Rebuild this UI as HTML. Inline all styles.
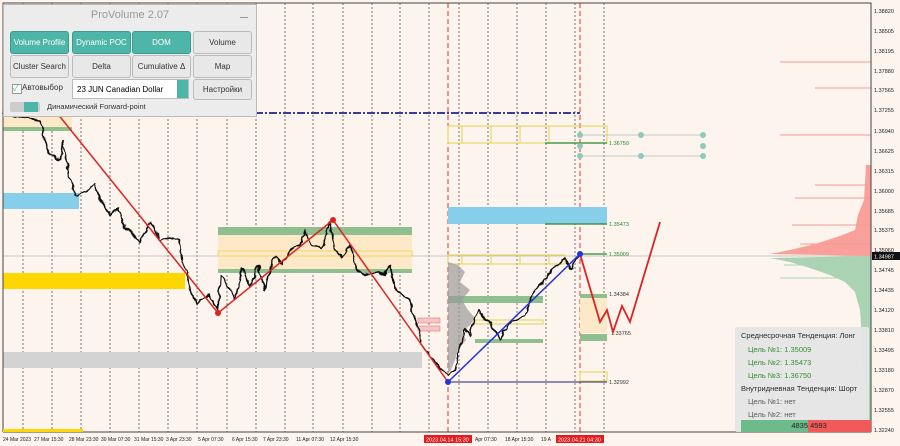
<!DOCTYPE html>
<html><head><meta charset="utf-8"><style>
body{margin:0;width:900px;height:446px;overflow:hidden;background:#fdf4ee;font-family:"Liberation Sans","Noto Sans CJK SC",sans-serif}
.p{position:absolute}
.btn{position:absolute;height:21px;border-radius:3px;font-size:8px;text-align:center;line-height:21px;border:1px solid #bbb}
.g{background:#4db6a8;color:#fff;border-color:#3a9c8f}
.w{background:#e8e8e8;color:#333}
</style></head><body>
<svg class="p" style="left:0;top:0" width="900" height="446">
<defs><filter id="j" x="-5%" y="-5%" width="110%" height="110%"><feTurbulence type="fractalNoise" baseFrequency="0.12" numOctaves="2" seed="3"/><feDisplacementMap in="SourceGraphic" scale="6" xChannelSelector="R" yChannelSelector="G"/></filter></defs>
<rect x="0" y="0" width="900" height="446" fill="#fdf4ee"/>
<g stroke="#555" stroke-width="0.8" stroke-dasharray="2,2">
<line x1="23" y1="3" x2="23" y2="432"/><line x1="52" y1="3" x2="52" y2="432"/><line x1="81" y1="3" x2="81" y2="432"/><line x1="110" y1="3" x2="110" y2="432"/><line x1="139" y1="3" x2="139" y2="432"/><line x1="168" y1="3" x2="168" y2="432"/><line x1="197" y1="3" x2="197" y2="432"/><line x1="227" y1="3" x2="227" y2="432"/><line x1="256" y1="3" x2="256" y2="432"/><line x1="285" y1="3" x2="285" y2="432"/><line x1="313" y1="3" x2="313" y2="432"/><line x1="343" y1="3" x2="343" y2="432"/><line x1="372" y1="3" x2="372" y2="432"/><line x1="400" y1="3" x2="400" y2="432"/><line x1="429" y1="3" x2="429" y2="432"/><line x1="459" y1="3" x2="459" y2="432"/><line x1="488" y1="3" x2="488" y2="432"/><line x1="517" y1="3" x2="517" y2="432"/><line x1="546" y1="3" x2="546" y2="432"/><line x1="575" y1="3" x2="575" y2="432"/><line x1="604" y1="3" x2="604" y2="432"/>
</g>
<g stroke="#d33" stroke-width="1" stroke-dasharray="5,3"><line x1="448" y1="3" x2="448" y2="432"/><line x1="580" y1="3" x2="580" y2="432"/></g>
<line x1="3" y1="256" x2="871" y2="256" stroke="#bbb" stroke-width="0.8"/>
<polygon points="871,165 866,165 864,200 858,215 855,230 840,236 815,244 790,250 770,254 871,256" fill="#f9a09a"/>
<polygon points="871,256 770,258 790,262 810,268 830,275 845,282 855,292 860,310 862,340 864,380 866,420 871,432" fill="#a9d3b3"/>
<g stroke="#f29a96" stroke-width="1"><line x1="780" y1="62" x2="871" y2="62"/><line x1="780" y1="135" x2="871" y2="135"/><line x1="815" y1="88" x2="871" y2="88"/><line x1="815" y1="185" x2="871" y2="185"/><line x1="795" y1="198" x2="871" y2="198"/><line x1="792" y1="225" x2="871" y2="225"/><line x1="800" y1="244" x2="871" y2="244"/></g>
<g stroke="#a9d3b3" stroke-width="1"><line x1="784" y1="265" x2="871" y2="265"/><line x1="780" y1="278" x2="871" y2="278"/></g>
<rect x="3" y="110" width="69" height="18" fill="#fde8c8"/><rect x="3" y="127" width="69" height="4" fill="#8fbf8f"/>
<rect x="3" y="193" width="76" height="16" fill="#87ceeb"/>
<rect x="3" y="273" width="182" height="16" fill="#ffd700"/>
<rect x="3" y="352" width="419" height="16" fill="#d3d3d3"/>
<rect x="218" y="227" width="194" height="46" fill="#fde8c8"/>
<rect x="218" y="227" width="194" height="8" fill="#8fbf8f"/><rect x="218" y="269" width="194" height="4" fill="#8fbf8f"/>
<rect x="218" y="251" width="194" height="5" fill="none" stroke="#e8d24a" stroke-width="0.8"/>
<g fill="none" stroke="#e8d24a" stroke-width="1"><rect x="448" y="126" width="159" height="17"/><line x1="462" y1="126" x2="462" y2="143"/><line x1="491" y1="126" x2="491" y2="143"/><line x1="520" y1="126" x2="520" y2="143"/><line x1="549" y1="126" x2="549" y2="143"/>
<rect x="448" y="255" width="117" height="9"/><line x1="462" y1="255" x2="462" y2="264"/><line x1="491" y1="255" x2="491" y2="264"/><line x1="520" y1="255" x2="520" y2="264"/><line x1="549" y1="255" x2="549" y2="264"/>
<rect x="475" y="320" width="68" height="4"/><rect x="580" y="372" width="27" height="9"/><rect x="580" y="313" width="27" height="4"/></g>
<rect x="448" y="207" width="159" height="17" fill="#87ceeb"/>
<rect x="448" y="296" width="95" height="7" fill="#8fbf8f"/><rect x="475" y="339" width="68" height="4" fill="#8fbf8f"/>
<rect x="580" y="297" width="27" height="36" fill="#fde8c8"/><rect x="580" y="294" width="27" height="4" fill="#8fbf8f"/><rect x="580" y="334" width="27" height="7" fill="#8fbf8f"/>
<polygon points="448,262 458,265 465,272 460,282 470,290 462,300 468,310 475,318 470,325 462,332 466,340 458,350 455,360 450,372 448,372" fill="#9a9a9a" opacity="0.7"/>
<rect x="418" y="318" width="22" height="5" fill="#f4c6c6" stroke="#d66" stroke-width="0.5"/><rect x="418" y="326" width="22" height="5" fill="#f4c6c6" stroke="#d66" stroke-width="0.5"/>
<g stroke="#2a8a2a" stroke-width="1.2"><line x1="545" y1="143" x2="607" y2="143"/><line x1="545" y1="224" x2="607" y2="224"/><line x1="582" y1="254" x2="607" y2="254"/></g>
<line x1="448" y1="382" x2="607" y2="382" stroke="#22227a" stroke-width="1"/>
<line x1="255" y1="113" x2="580" y2="113" stroke="#3a3aa0" stroke-width="2" stroke-dasharray="8,2,2,2"/>
<g fill="none" stroke="#bbb" stroke-width="0.7"><line x1="580" y1="135" x2="703" y2="135"/><line x1="580" y1="156" x2="703" y2="156"/></g>
<g fill="#8fc9b9"><circle cx="580" cy="135" r="3"/><circle cx="641" cy="135" r="3"/><circle cx="703" cy="135" r="3"/><circle cx="580" cy="146" r="3"/><circle cx="703" cy="146" r="3"/><circle cx="580" cy="156" r="3"/><circle cx="641" cy="156" r="3"/><circle cx="703" cy="156" r="3"/></g>
<g font-size="5.5" fill="#2a8a2a"><text x="609" y="145">1.36750</text><text x="609" y="226">1.35473</text><text x="609" y="256">1.35009</text></g>
<g font-size="5.5" fill="#333"><text x="609" y="296">1.34384</text><text x="611" y="335">1.33765</text><text x="609" y="384">1.32992</text></g>
<polyline filter="url(#j)" fill="none" stroke="#111" stroke-width="1.6" stroke-linejoin="round" points="3,113 20,118 40,120 45,140 50,155 60,160 62,140 68,170 75,195 85,192 95,185 100,200 110,215 118,208 125,228 135,235 140,242 150,222 155,228 160,240 170,238 178,240 185,270 190,290 196,305 200,300 210,295 218,310 220,275 228,285 235,300 242,268 250,287 258,265 265,290 275,255 282,265 290,250 300,245 305,230 312,245 322,248 330,222 335,250 342,258 350,245 356,268 365,275 375,272 385,275 390,265 395,290 405,295 410,300 415,318 420,340 425,350 435,362 440,368 448,375 455,370 460,345 465,330 470,335 478,310 485,320 492,325 500,340 505,330 510,322 518,320 525,315 530,300 535,290 540,285 548,275 555,268 560,262 565,258 570,270 575,260 580,258"/>
<polyline fill="none" stroke="#d22" stroke-width="1.5" points="57,113 218,313 333,220 448,382"/>
<line x1="448" y1="382" x2="580" y2="254" stroke="#2233dd" stroke-width="1.5"/>
<polyline fill="none" stroke="#d22" stroke-width="1.8" points="580,254 600,322 607,310 613,332 622,306 630,322 660,222"/>
<circle cx="218" cy="313" r="3" fill="#d22"/><circle cx="333" cy="220" r="3" fill="#d22"/><circle cx="448" cy="382" r="3" fill="#2233dd"/><circle cx="580" cy="254" r="3" fill="#2233dd"/>
<rect x="3" y="3" width="868" height="429" fill="none" stroke="#444" stroke-width="1"/>
<rect x="0" y="432" width="900" height="14" fill="#fdf4ee"/>
<line x1="3" y1="432" x2="871" y2="432" stroke="#444"/>
<rect x="3" y="429" width="80" height="3" fill="#ffd700"/>
<g font-size="5.5" fill="#222">
<text x="874" y="13">1.38820</text><text x="874" y="33">1.38505</text><text x="874" y="53">1.38195</text><text x="874" y="73">1.37880</text><text x="874" y="92">1.37565</text><text x="874" y="112">1.37255</text><text x="874" y="133">1.36940</text><text x="874" y="153">1.36625</text><text x="874" y="173">1.36315</text><text x="874" y="193">1.36000</text><text x="874" y="213">1.35685</text><text x="874" y="232">1.35375</text><text x="874" y="252">1.35060</text><text x="874" y="272">1.34745</text><text x="874" y="292">1.34435</text><text x="874" y="312">1.34120</text><text x="874" y="332">1.33810</text><text x="874" y="352">1.33495</text><text x="874" y="372">1.33180</text><text x="874" y="392">1.32870</text><text x="874" y="412">1.32555</text><text x="874" y="432">1.32240</text>
</g>
<rect x="872" y="252" width="28" height="8" fill="#111"/><text x="874" y="258.5" font-size="5.5" fill="#fff">1.34987</text>
<g font-size="5" fill="#222">
<text x="3" y="441">24 Mar 2023</text><text x="34" y="441">27 Mar 15:30</text><text x="69" y="441">28 Mar 23:30</text><text x="101" y="441">30 Mar 07:30</text><text x="134" y="441">31 Mar 15:30</text><text x="166" y="441">3 Apr 23:30</text><text x="198" y="441">5 Apr 07:30</text><text x="232" y="441">6 Apr 15:30</text><text x="263" y="441">7 Apr 23:30</text><text x="296" y="441">11 Apr 07:30</text><text x="330" y="441">12 Apr 15:30</text><text x="475" y="441">Apr 07:30</text><text x="505" y="441">18 Apr 15:30</text><text x="541" y="441">19 A</text>
</g>
<rect x="424" y="435" width="48" height="8" fill="#e8191e"/><text x="426" y="441.5" font-size="5.5" fill="#fff">2023.04.14 15:30</text>
<rect x="556" y="435" width="48" height="8" fill="#e8191e"/><text x="558" y="441.5" font-size="5.5" fill="#fff">2023.04.21 04:30</text>
</svg>
<div class="p" style="left:3px;top:4px;width:252px;height:111px;background:#ececec;border:1px solid #bbb">
<div style="text-align:center;color:#999;font-size:11px;line-height:16px;margin-top:2px">ProVolume 2.07</div>
<div style="position:absolute;right:8px;top:12px;width:8px;height:1px;background:#999"></div>
<div class="btn g" style="left:6px;top:26px;width:57px">Volume Profile</div>
<div class="btn g" style="left:68px;top:26px;width:57px">Dynamic POC</div>
<div class="btn g" style="left:128px;top:26px;width:57px">DOM</div>
<div class="btn w" style="left:189px;top:26px;width:57px">Volume</div>
<div class="btn w" style="left:6px;top:50px;width:57px">Cluster Search</div>
<div class="btn w" style="left:68px;top:50px;width:57px">Delta</div>
<div class="btn w" style="left:128px;top:50px;width:57px">Cumulative Δ</div>
<div class="btn w" style="left:189px;top:50px;width:57px">Map</div>
<div style="position:absolute;left:8px;top:78px;font-size:8px;color:#333"><span style="display:inline-block;width:8px;height:8px;border:1px solid #999;background:#fff;vertical-align:-1px;color:#4db6a8;font-size:8px;line-height:8px">✓</span>Автовыбор</div>
<div style="position:absolute;left:68px;top:74px;width:117px;height:20px;background:#fff;border:1px solid #bbb;font-size:8px;line-height:20px;padding-left:4px;box-sizing:border-box">23 JUN Canadian Dollar<span style="position:absolute;right:0;top:0;width:11px;height:18px;background:#4db6a8"></span></div>
<div class="btn w" style="left:189px;top:74px;width:57px;height:19px;line-height:19px">Настройки</div>
<div style="position:absolute;left:6px;top:97px;width:30px;height:10px;background:#ccc;border-radius:2px"><div style="margin-left:14px;width:14px;height:10px;background:#4db6a8"></div></div>
<div style="position:absolute;left:43px;top:97px;font-size:7.5px;color:#333">Динамический Forward-point</div>
</div>
<div class="p" style="left:735px;top:327px;width:134px;height:105px;background:#e6e6e6;opacity:0.95;border-radius:2px;font-size:7.5px;line-height:13px">
<div style="padding:2px 6px;color:#222">Среднесрочная Тенденция: Лонг</div>
<div style="padding-left:13px;color:#2a8a2a;margin-top:-1px">Цель №1: 1.35009</div>
<div style="padding-left:13px;color:#2a8a2a">Цель №2: 1.35473</div>
<div style="padding-left:13px;color:#2a8a2a">Цель №3: 1.36750</div>
<div style="padding-left:6px;color:#222">Внутридневная Тенденция: Шорт</div>
<div style="padding-left:13px;color:#555">Цель №1: нет</div>
<div style="padding-left:13px;color:#555">Цель №2: нет</div>
</div>
<div class="p" style="left:741px;top:420px;width:67px;height:12px;background:#6dbb8a;font-size:7.5px;line-height:12px;text-align:right;color:#222">4835</div>
<div class="p" style="left:808px;top:420px;width:63px;height:12px;background:#f25a5a;font-size:7.5px;line-height:12px;color:#222">&nbsp;4593</div>
</body></html>
